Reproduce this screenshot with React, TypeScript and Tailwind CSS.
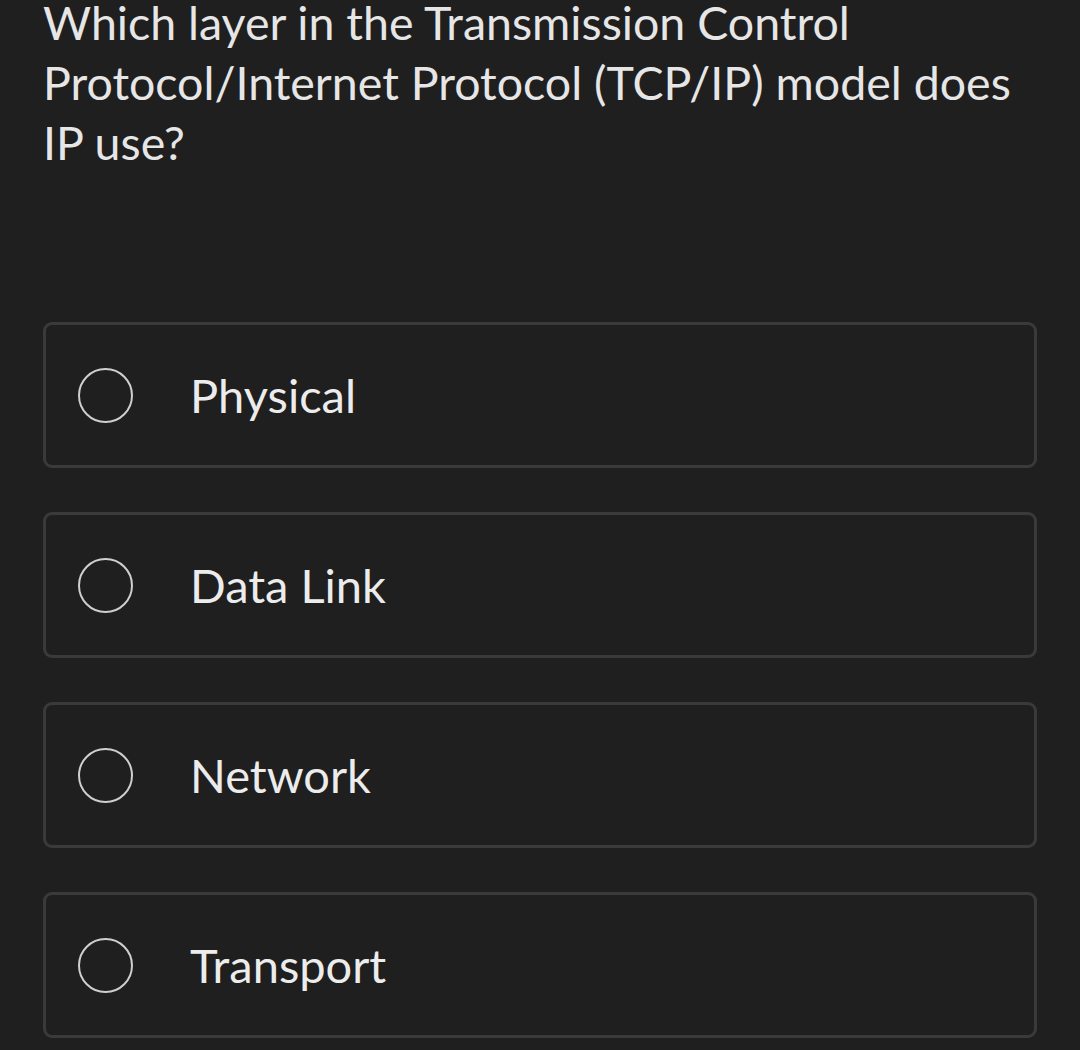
const options = ['Physical', 'Data Link', 'Network', 'Transport'];

export default function App() {
  return (
    <div
      className="min-h-[1050px] w-[1080px] overflow-hidden bg-[#1f1f1f] pl-[43px] pr-[43px]"
      style={{ fontFamily: 'Lato, "Noto Sans", sans-serif' }}
    >
      <h1 className="-mt-[8px] text-[46.5px] font-normal leading-[60px] text-[#e6e6e6]">
        Which layer in the Transmission Control Protocol/Internet Protocol (TCP/IP) model does IP use?
      </h1>

      <div className="mt-[150px] flex flex-col gap-[44px]">
        {options.map((opt) => (
          <label
            key={opt}
            className="flex h-[146px] items-center rounded-[9px] border-[3px] border-[#3a3a3a] pl-[32px]"
          >
            <span className="h-[55px] w-[55px] shrink-0 rounded-full border-2 border-[#cfcfcf]" />
            <span className="ml-[57px] text-[47px] leading-none text-[#ececec]">{opt}</span>
          </label>
        ))}
      </div>
    </div>
  );
}
